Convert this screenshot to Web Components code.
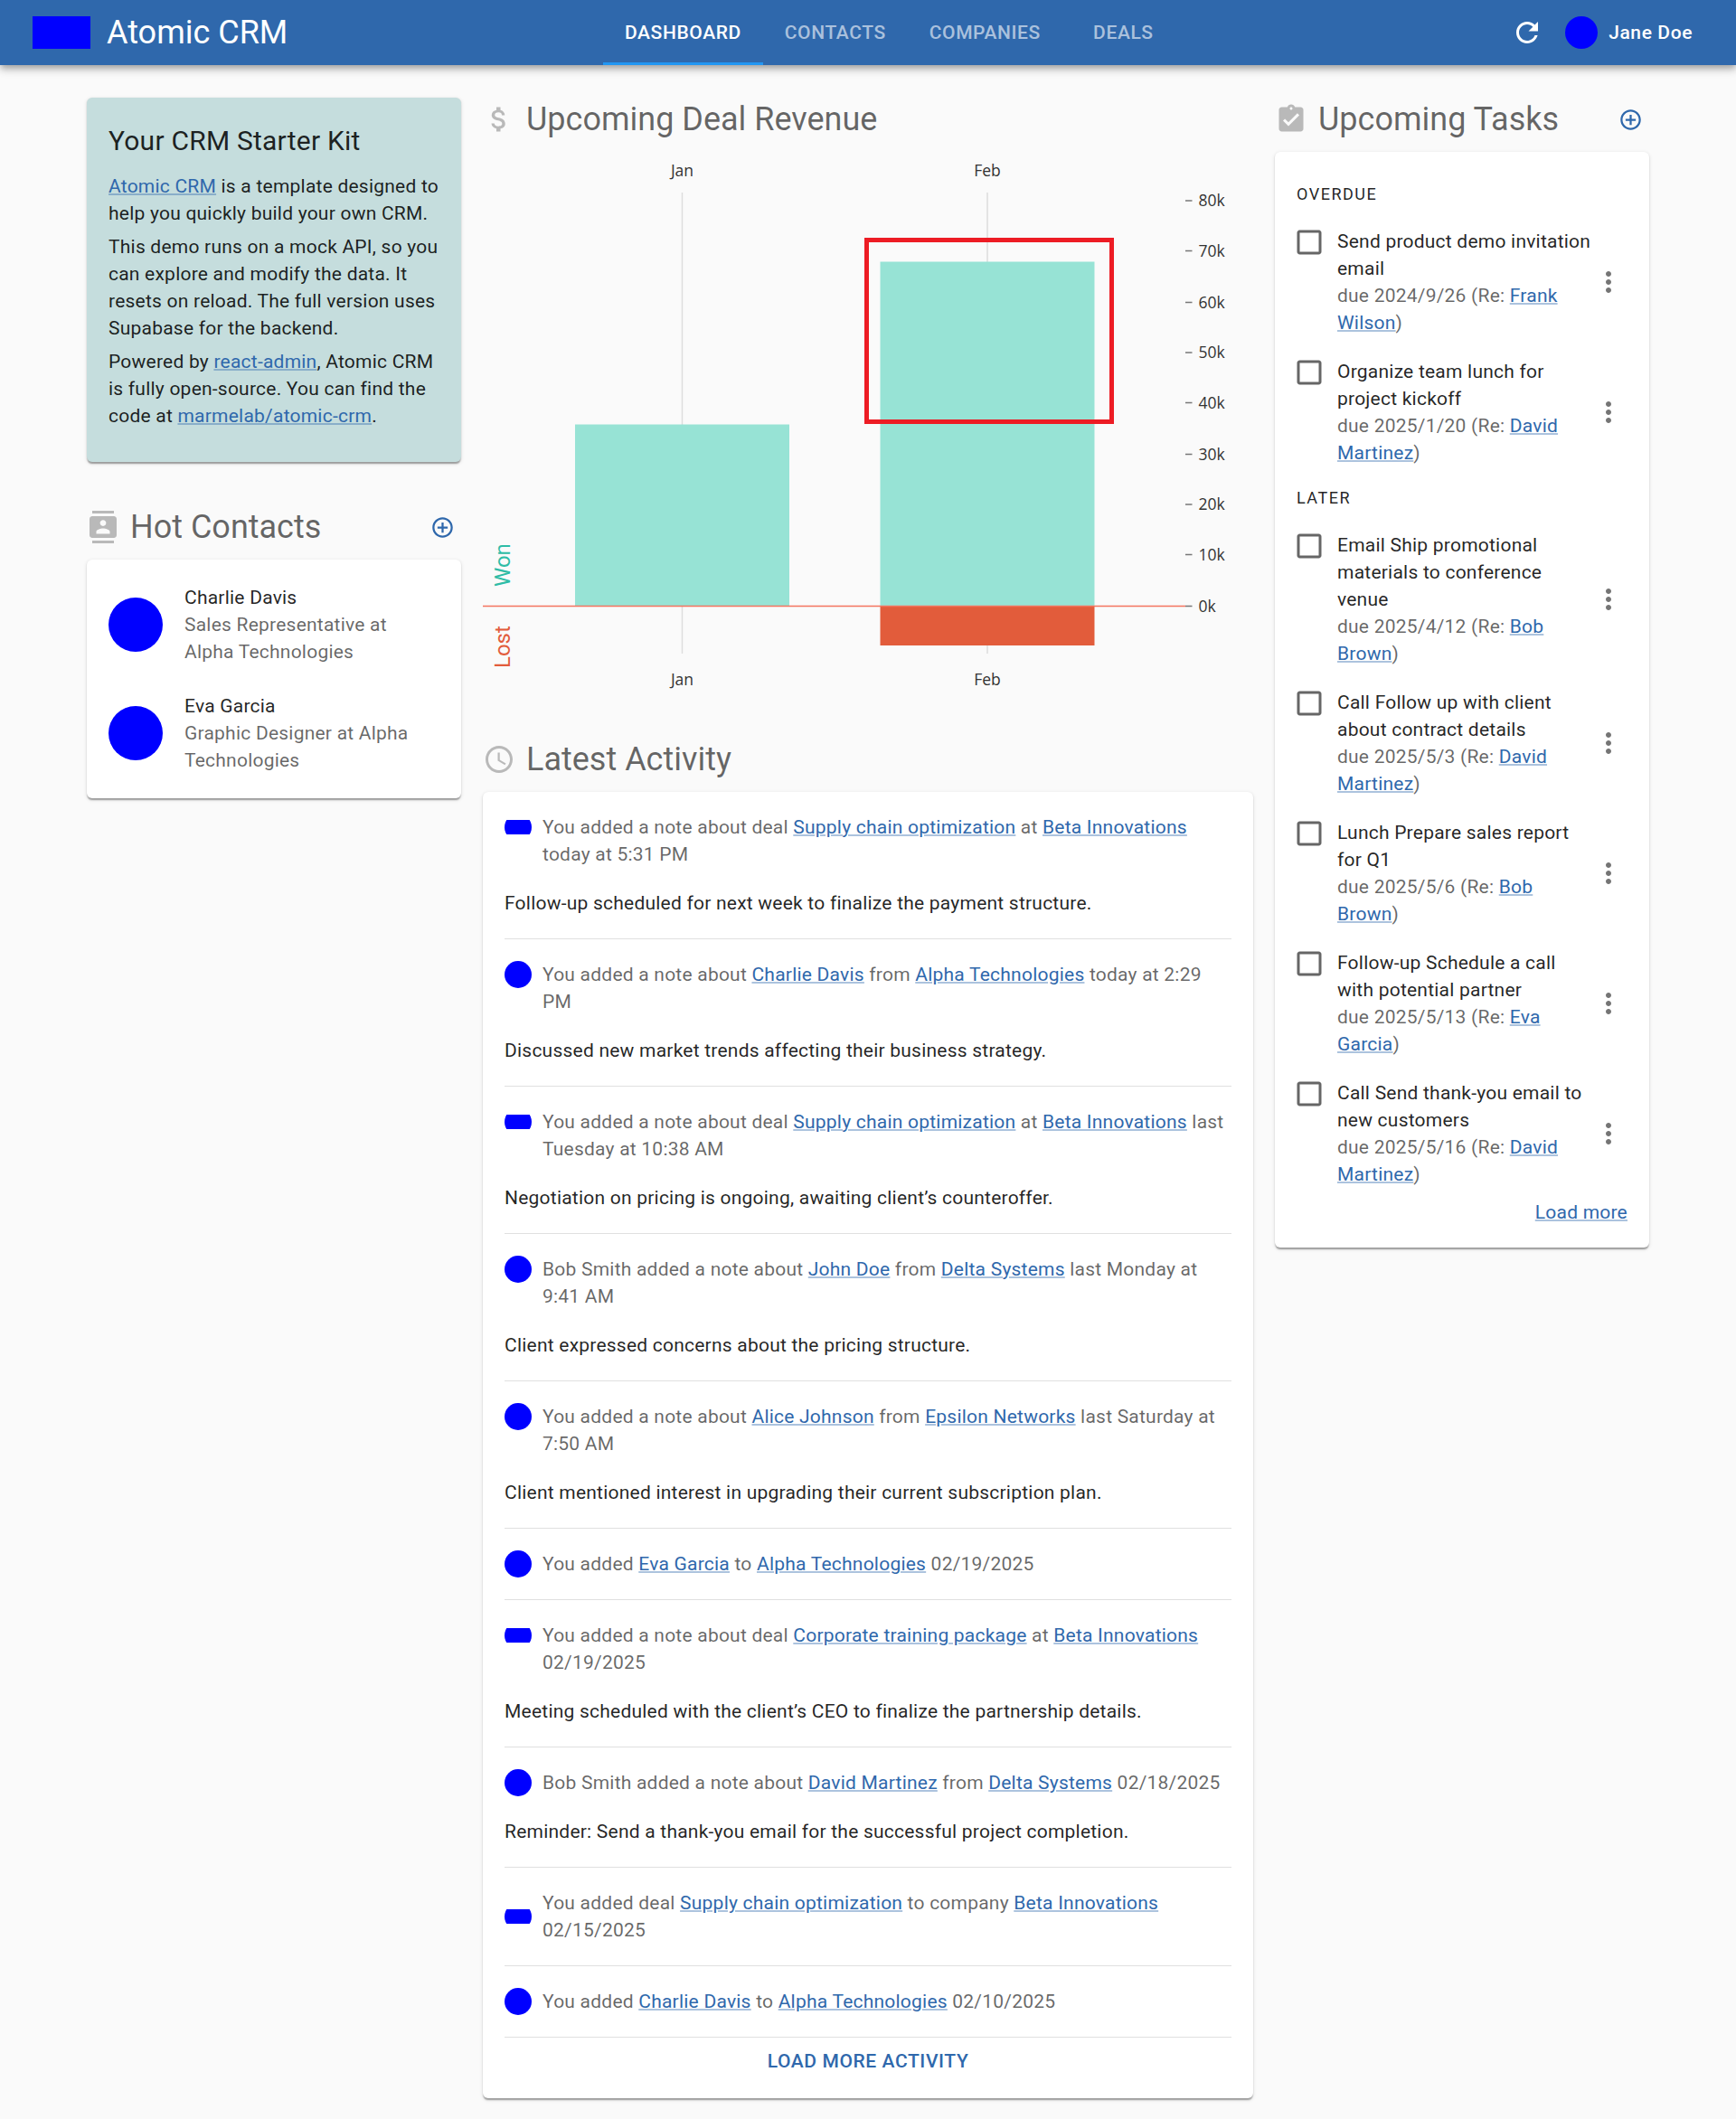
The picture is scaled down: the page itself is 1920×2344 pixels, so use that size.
<!DOCTYPE html>
<html lang="en">
<head>
<meta charset="utf-8">
<title>Atomic CRM</title>
<style>
  html, body { margin: 0; }
  body {
    background: #fafafa;
    color: rgba(0,0,0,.87);
    font-family: Roboto, "Liberation Sans", sans-serif;
    font-size: 21px;
    line-height: 1.43;
    letter-spacing: .01071em;
    height: 2344px;
    overflow: hidden;
  }
</style>
</head>
<body>
<crm-app></crm-app>

<script>
const PATHS = {
  refresh: 'M17.65 6.35C16.2 4.9 14.21 4 12 4c-4.42 0-7.99 3.58-7.99 8s3.57 8 7.99 8c3.73 0 6.84-2.55 7.73-6h-2.08c-.82 2.33-3.04 4-5.65 4-3.31 0-6-2.69-6-6s2.69-6 6-6c1.66 0 3.14.69 4.22 1.78L13 11h7V4l-2.35 2.35z',
  dollar: 'M11.8 10.9c-2.27-.59-3-1.2-3-2.15 0-1.09 1.01-1.85 2.7-1.85 1.78 0 2.44.85 2.5 2.1h2.21c-.07-1.72-1.12-3.3-3.21-3.81V3h-3v2.16c-1.94.42-3.5 1.68-3.5 3.61 0 2.31 1.91 3.46 4.7 4.13 2.5.6 3 1.48 3 2.41 0 .69-.49 1.79-2.7 1.79-2.06 0-2.87-.92-2.98-2.1h-2.2c.12 2.19 1.76 3.42 3.68 3.83V21h3v-2.15c1.95-.37 3.5-1.5 3.5-3.55 0-2.84-2.43-3.81-4.7-4.4z',
  contacts: 'M20 0H4v2h16V0zM4 24h16v-2H4v2zM20 4H4c-1.1 0-2 .9-2 2v12c0 1.100.9 2 2 2h16c1.100 0 2-.9 2-2V6c0-1.100-.9-2-2-2zm-8 2.750c1.240 0 2.250 1.010 2.250 2.250s-1.010 2.250-2.250 2.250S9.750 10.240 9.750 9 10.760 6.750 12 6.750zM17 17H7v-1.500c0-1.670 3.330-2.500 5-2.500s5 .83 5 2.500V17z',
  clock: 'M11.990 2C6.470 2 2 6.480 2 12s4.470 10 9.990 10C17.520 22 22 17.520 22 12S17.520 2 11.990 2zM12 20c-4.420 0-8-3.580-8-8s3.580-8 8-8 8 3.580 8 8-3.580 8-8 8zm.5-13H11v6l5.250 3.150.75-1.230-4.500-2.670z',
  task: 'M19 3h-4.180C14.400 1.840 13.300 1 12 1c-1.300 0-2.400.84-2.820 2H5c-1.100 0-2 .9-2 2v14c0 1.100.9 2 2 2h14c1.100 0 2-.9 2-2V5c0-1.100-.9-2-2-2zm-7 0c.55 0 1 .45 1 1s-.45 1-1 1-1-.45-1-1 .45-1 1-1zm-2 14l-4-4 1.410-1.410L10 14.170l6.590-6.590L18 9l-8 8z',
  add: 'M13 7h-2v4H7v2h4v4h2v-4h4v-2h-4V7zm-1-5C6.480 2 2 6.480 2 12s4.480 10 10 10 10-4.480 10-10S17.520 2 12 2zm0 18c-4.410 0-8-3.590-8-8s3.590-8 8-8 8 3.590 8 8-3.590 8-8 8z',
  box: 'M19 5v14H5V5h14m0-2H5c-1.100 0-2 .9-2 2v14c0 1.100.9 2 2 2h14c1.100 0 2-.9 2-2V5c0-1.100-.9-2-2-2z',
  more: 'M12 8c1.100 0 2-.9 2-2s-.9-2-2-2-2 .9-2 2 .9 2 2 2zm0 2c-1.100 0-2 .9-2 2s.9 2 2 2 2-.9 2-2-.9-2-2-2zm0 6c-1.100 0-2 .9-2 2s.9 2 2 2 2-.9 2-2-.9-2-2-2z'
};

function define(name, html) {
  const template = document.createElement('template');
  customElements.define(name, class extends HTMLElement {
    constructor() {
      super();
      this.attachShadow({ mode: 'open' });
    }
    connectedCallback() {
      if (this.shadowRoot.firstChild) return;
      template.innerHTML = typeof html === 'function' ? html(this) : html;
      this.shadowRoot.append(template.content.cloneNode(true));
    }
  });
}

define('crm-icon', el => {
  const size = el.getAttribute('size') || 36;
  return `<style>
    :host { display: block; flex: none; width: ${size}px; height: ${size}px; }
    svg { display: block; fill: currentColor; }
  </style>
  <svg width="${size}" height="${size}" viewBox="0 0 24 24"><path d="${PATHS[el.getAttribute('name')]}"/></svg>`;
});

define('crm-link', `<style>
  :host { display: inline; }
  a { color: #2f68ac; text-decoration: underline rgba(47,104,172,.4); text-decoration-thickness: 2px; cursor: pointer; }
</style><a><slot></slot></a>`);

define('crm-avatar', el => {
  const size = el.getAttribute('size') || 30;
  const h = el.hasAttribute('logo') ? 16 : size;
  return `<style>
    :host { display: flex; flex: none; width: ${size}px; height: ${size}px; border-radius: 50%; overflow: hidden; align-items: center; }
    div { width: 100%; height: ${h}px; background: #00f; }
  </style><div></div>`;
});

define('crm-card', `<style>
  :host { display: block; background: var(--card-bg, #fff); border-radius: 6px;
    box-shadow: 0 3px 1.5px -1.5px rgba(0,0,0,.2), 0 1.5px 1.5px 0 rgba(0,0,0,.14), 0 1.5px 4.5px 0 rgba(0,0,0,.12); }
</style><slot></slot>`);

define('section-title', el => `<style>
  :host { display: flex; align-items: center; height: 48px; margin-bottom: 12px; }
  .icon { color: rgba(0,0,0,.26); margin-right: 12px; }
  h2 { margin: 0; flex: 1; font-size: 36px; font-weight: 400; line-height: 48px; letter-spacing: 0; color: rgba(0,0,0,.6); }
  .add { color: #2f68ac; margin-right: 7.5px; }
</style>
<crm-icon class="icon" name="${el.getAttribute('icon')}"></crm-icon>
<h2><slot></slot></h2>
${el.hasAttribute('add') ? '<crm-icon class="add" name="add" size="27"></crm-icon>' : ''}`);

define('crm-tab', `<style>
  :host { display: flex; box-sizing: border-box; min-width: 135px; height: 72px; padding: 0 24px; align-items: center; justify-content: center;
    font-weight: 500; letter-spacing: .02857em; color: rgba(255,255,255,.6); border-bottom: 3px solid transparent; border-top: 3px solid transparent; }
  :host([selected]) { color: #fff; border-bottom-color: #2196f3; }
</style><slot></slot>`);

define('crm-header', `<style>
  :host { display: flex; align-items: center; height: 72px; padding: 0 48px 0 36px; background: #2f68ac; color: #fff;
    box-shadow: 0 3px 6px -1.5px rgba(0,0,0,.2), 0 6px 7.5px 0 rgba(0,0,0,.14), 0 1.5px 15px 0 rgba(0,0,0,.12); }
  .brand { display: flex; align-items: center; width: 631px; gap: 18px; }
  .logo { width: 64px; height: 36px; background: #00f; }
  h1 { margin: 0; font-size: 36px; font-weight: 400; line-height: 48px; letter-spacing: 0; }
  nav { display: flex; flex: 1; }
  .user { display: flex; align-items: center; font-weight: 500; letter-spacing: .02857em; }
  crm-avatar { margin: 0 12px 0 24px; }
</style>
<div class="brand"><div class="logo"></div><h1>Atomic CRM</h1></div>
<nav><crm-tab selected>DASHBOARD</crm-tab><crm-tab>CONTACTS</crm-tab><crm-tab>COMPANIES</crm-tab><crm-tab>DEALS</crm-tab></nav>
<div class="user"><crm-icon name="refresh"></crm-icon><crm-avatar size="36"></crm-avatar><span>Jane Doe</span></div>`);

define('welcome-card', `<style>
  :host { display: block; }
  crm-card { --card-bg: #c5dddd; padding: 24px 24px 36px; }
  h3 { margin: 0 0 10.5px; font-size: 30px; font-weight: 400; line-height: 48px; letter-spacing: .0075em; }
  p { margin: 0 0 7.35px; }
  p:last-child { margin: 0; }
</style>
<crm-card>
  <h3>Your CRM Starter Kit</h3>
  <p><crm-link>Atomic CRM</crm-link> is a template designed to help you quickly build your own CRM.</p>
  <p>This demo runs on a mock API, so you can explore and modify the data. It resets on reload. The full version uses Supabase for the backend.</p>
  <p>Powered by <crm-link>react-admin</crm-link>, Atomic CRM is fully open-source. You can find the code at <crm-link>marmelab/atomic-crm</crm-link>.</p>
</crm-card>`);

define('contact-row', el => `<style>
  :host { display: flex; align-items: center; gap: 24px; padding: 15px 30px 15px 24px; }
  .role { color: rgba(0,0,0,.6); }
</style>
<crm-avatar size="60"></crm-avatar>
<div><div>${el.getAttribute('name')}</div><div class="role"><slot></slot></div></div>`);

define('hot-contacts', `<style>
  :host { display: block; }
  crm-card { padding: 12px 0; }
</style>
<section-title icon="contacts" add>Hot Contacts</section-title>
<crm-card>
  <contact-row name="Charlie Davis">Sales Representative at Alpha Technologies</contact-row>
  <contact-row name="Eva Garcia">Graphic Designer at Alpha Technologies</contact-row>
</crm-card>`);

define('revenue-chart', () => {
  const ticks = [222, 277.5, 334.5, 390, 445.5, 502.5, 558, 613.5, 670.5];
  return `<style>
    :host { display: block; }
    svg { display: block; overflow: visible; }
    .axis { font: 17.5px "Open Sans", "Noto Sans", sans-serif; letter-spacing: 0; fill: #333; }
    .side { font-size: 24px; letter-spacing: 0; }
    .mid { text-anchor: middle; }
  </style>
  <section-title icon="dollar">Upcoming Deal Revenue</section-title>
  <svg width="852" height="600" viewBox="534 168 852 600">
    <g stroke="#ddd" stroke-width="1.5"><path d="M754.5 213V723M1092 213V723"/></g>
    <rect x="636" y="469.5" width="237" height="201" fill="#97e3d5"/>
    <rect x="973.5" y="289.5" width="237" height="381" fill="#97e3d5"/>
    <rect x="973.5" y="670.5" width="237" height="43.5" fill="#e25c3b"/>
    <path d="M534 670.5H1311" stroke="#f47560" stroke-width="1.5"/>
    <g class="axis">
      <g class="mid"><text x="754.5" y="195">Jan</text><text x="1092" y="195">Feb</text>
      <text x="754.5" y="757.5">Jan</text><text x="1092" y="757.5">Feb</text></g>
      ${ticks.map((y, i) => `<path d="M1311 ${y}h7.5" stroke="#777" stroke-width="1.5"/><text x="1325.5" y="${y + 6.4}">${80 - i * 10}k</text>`).join('')}
    </g>
    <text class="side" fill="#2ebca6" transform="translate(564 649) rotate(-90)">Won</text>
    <text class="side" fill="#e25c3b" transform="translate(564 739) rotate(-90)">Lost</text>
    <rect x="958.5" y="265.5" width="271" height="201" fill="none" stroke="#ed1c24" stroke-width="5"/>
  </svg>`;
});

define('activity-item', el => {
  const note = el.getAttribute('note');
  return `<style>
    :host { display: flex; flex-direction: column; gap: 24px; padding-bottom: 24px; margin-bottom: 24px; border-bottom: 1px solid #e0e0e0; }
    :host(:last-of-type) { margin-bottom: 0; }
    .row { display: flex; gap: 12px; align-items: ${note ? 'flex-start' : 'center'}; color: rgba(0,0,0,.6); }
    .text { flex: 1; min-width: 0; }
  </style>
  <div class="row"><crm-avatar ${el.hasAttribute('logo') ? 'logo' : ''}></crm-avatar><div class="text"><slot></slot></div></div>
  ${note ? `<div>${note}</div>` : ''}`;
});

define('latest-activity', `<style>
  :host { display: block; }
  crm-card { padding: 24px 24px 12px; }
  .more { display: flex; justify-content: center; padding: 11px 0 13.5px; color: #2f68ac; font-weight: 500; letter-spacing: .02857em; }
</style>
<section-title icon="clock">Latest Activity</section-title>
<crm-card>
  <activity-item logo note="Follow-up scheduled for next week to finalize the payment structure.">You added a note about deal <crm-link>Supply chain optimization</crm-link> at <crm-link>Beta Innovations</crm-link> today at 5:31 PM</activity-item>
  <activity-item note="Discussed new market trends affecting their business strategy.">You added a note about <crm-link>Charlie Davis</crm-link> from <crm-link>Alpha Technologies</crm-link> today at 2:29 PM</activity-item>
  <activity-item logo note="Negotiation on pricing is ongoing, awaiting client’s counteroffer.">You added a note about deal <crm-link>Supply chain optimization</crm-link> at <crm-link>Beta Innovations</crm-link> last Tuesday at 10:38 AM</activity-item>
  <activity-item note="Client expressed concerns about the pricing structure.">Bob Smith added a note about <crm-link>John Doe</crm-link> from <crm-link>Delta Systems</crm-link> last Monday at 9:41 AM</activity-item>
  <activity-item note="Client mentioned interest in upgrading their current subscription plan.">You added a note about <crm-link>Alice Johnson</crm-link> from <crm-link>Epsilon Networks</crm-link> last Saturday at 7:50 AM</activity-item>
  <activity-item>You added <crm-link>Eva Garcia</crm-link> to <crm-link>Alpha Technologies</crm-link> 02/19/2025</activity-item>
  <activity-item logo note="Meeting scheduled with the client’s CEO to finalize the partnership details.">You added a note about deal <crm-link>Corporate training package</crm-link> at <crm-link>Beta Innovations</crm-link> 02/19/2025</activity-item>
  <activity-item note="Reminder: Send a thank-you email for the successful project completion.">Bob Smith added a note about <crm-link>David Martinez</crm-link> from <crm-link>Delta Systems</crm-link> 02/18/2025</activity-item>
  <activity-item logo>You added deal <crm-link>Supply chain optimization</crm-link> to company <crm-link>Beta Innovations</crm-link> 02/15/2025</activity-item>
  <activity-item>You added <crm-link>Charlie Davis</crm-link> to <crm-link>Alpha Technologies</crm-link> 02/10/2025</activity-item>
  <div class="more">LOAD MORE ACTIVITY</div>
</crm-card>`);

define('task-item', el => `<style>
  :host { display: flex; padding: 12px 3px 12px 0; }
  .check { color: rgba(0,0,0,.6); margin: -2.5px 13.5px 0 -4.5px; }
  .text { width: 282px; }
  .due { color: rgba(0,0,0,.6); }
  .menu { color: rgba(0,0,0,.54); align-self: center; }
</style>
<crm-icon class="check" name="box"></crm-icon>
<div class="text"><div><slot></slot></div><div class="due">due ${el.getAttribute('due')} (Re: <crm-link>${el.getAttribute('contact')}</crm-link>)</div></div>
<crm-icon class="menu" name="more"></crm-icon>`);

define('upcoming-tasks', `<style>
  :host { display: block; }
  crm-card { padding: 24px; }
  h4 { margin: 0; padding-bottom: 2px; font-size: 18px; font-weight: 400; line-height: 46px; letter-spacing: .08333em; }
  .more { text-align: right; }
</style>
<section-title icon="task" add>Upcoming Tasks</section-title>
<crm-card>
  <h4>OVERDUE</h4>
  <task-item due="2024/9/26" contact="Frank Wilson">Send product demo invitation email</task-item>
  <task-item due="2025/1/20" contact="David Martinez">Organize team lunch for project kickoff</task-item>
  <h4>LATER</h4>
  <task-item due="2025/4/12" contact="Bob Brown">Email Ship promotional materials to conference venue</task-item>
  <task-item due="2025/5/3" contact="David Martinez">Call Follow up with client about contract details</task-item>
  <task-item due="2025/5/6" contact="Bob Brown">Lunch Prepare sales report for Q1</task-item>
  <task-item due="2025/5/13" contact="Eva Garcia">Follow-up Schedule a call with potential partner</task-item>
  <task-item due="2025/5/16" contact="David Martinez">Call Send thank-you email to new customers</task-item>
  <div class="more"><crm-link>Load more</crm-link></div>
</crm-card>`);

define('crm-app', `<style>
  :host { display: block; }
  main { display: grid; grid-template-columns: 414px 852px 414px; gap: 24px; align-items: start; padding: 36px 96px 0; }
  .column { display: flex; flex-direction: column; gap: 48px; }
</style>
<crm-header></crm-header>
<main>
  <div class="column"><welcome-card></welcome-card><hot-contacts></hot-contacts></div>
  <div class="column"><revenue-chart></revenue-chart><latest-activity></latest-activity></div>
  <div class="column"><upcoming-tasks></upcoming-tasks></div>
</main>`);
</script>
</body>
</html>
